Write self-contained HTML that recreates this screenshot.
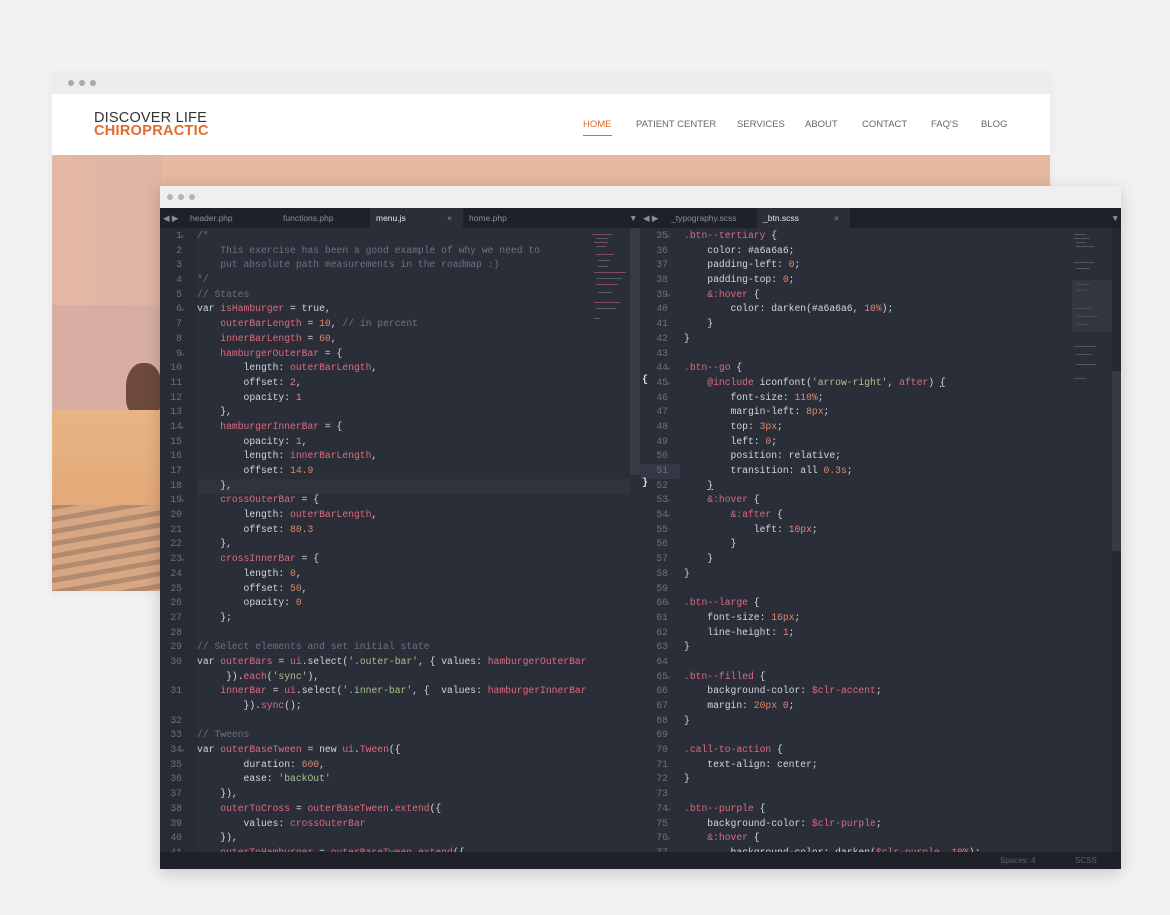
<!DOCTYPE html>
<html><head><meta charset="utf-8"><style>
*{margin:0;padding:0;box-sizing:border-box}
body{width:1170px;height:915px;background:#f2f2f2;position:relative;overflow:hidden;font-family:"Liberation Sans",sans-serif}
.dot{position:absolute;width:6px;height:6px;border-radius:50%;background:#a9a9a9}
#back{position:absolute;left:52px;top:72px;width:998px;height:519px;background:#fff;box-shadow:0 2px 8px rgba(0,0,0,.06)}
#back .tb{height:22px;background:#ececec;position:relative}
#back .hd{height:61px;background:#fff;position:relative}
.logo1{position:absolute;left:42px;top:16px;font-size:14.5px;color:#333;letter-spacing:.2px}
.logo2{position:absolute;left:42px;top:29px;font-size:14.5px;color:#e06a2c;font-weight:bold;letter-spacing:.3px}
.nav{position:absolute;top:25px;font-size:9.5px;color:#666}
#photo{position:absolute;left:0;top:83px;width:998px;height:436px;background:linear-gradient(180deg,#e6b9a0 0%,#e1b29a 30%,#d8b0a0 55%,#e2ae84 68%,#e8b07c 80%,#c99a74 100%)}
#front{position:absolute;left:160px;top:186px;width:961px;height:683px;background:#2a2e38;box-shadow:0 4px 16px rgba(0,0,0,.18)}
#front .tb{height:22px;background:#efefef;position:relative}
.tabs{position:absolute;top:22px;height:20px;background:#1e2128;font-size:8.5px;color:#8a8f99}
.tab{position:absolute;top:5px}
.pane{position:absolute;top:42px;bottom:17px;overflow:hidden;font-family:"Liberation Mono",monospace;font-size:9.7px;color:#d3d6db}
.row{height:14.7px;line-height:14.7px;white-space:pre;position:relative}
.ln{position:absolute;text-align:right;color:#6b717c;width:22px}
.c{color:#6c7280}.r{color:#de6a7e}.n{color:#e2876a}.s{color:#a7c48a}
.status{position:absolute;left:0;bottom:0;width:961px;height:17px;background:#1e2128;font-size:8px;color:#5e636d}
</style></head><body>
<div id="back">
 <div class="tb"><div class="dot" style="left:16px;top:8px"></div><div class="dot" style="left:27px;top:8px"></div><div class="dot" style="left:38px;top:8px"></div></div>
 <div class="hd">
  <div class="logo1">DISCOVER LIFE</div><div class="logo2">CHIROPRACTIC</div>
  <div class="nav" style="left:531px;color:#e06a2c">HOME</div>
  <div style="position:absolute;left:531px;top:41px;width:29px;height:1px;background:#e06a2c"></div>
  <div class="nav" style="left:584px">PATIENT CENTER</div>
  <div class="nav" style="left:685px">SERVICES</div>
  <div class="nav" style="left:753px">ABOUT</div>
  <div class="nav" style="left:810px">CONTACT</div>
  <div class="nav" style="left:879px">FAQ'S</div>
  <div class="nav" style="left:929px">BLOG</div>
 </div>
 <div id="photo">
  <div style="position:absolute;left:0;top:0;width:110px;height:155px;background:linear-gradient(90deg,#e4b8a4,#e0b4a4)"></div>
  <div style="position:absolute;left:0;top:150px;width:110px;height:110px;background:#d8aea2"></div>
  <div style="position:absolute;left:74px;top:208px;width:36px;height:52px;border-radius:45% 45% 30% 30%;background:#6e4a3e"></div>
  <div style="position:absolute;left:0;top:255px;width:110px;height:100px;background:linear-gradient(180deg,#e8b585,#e3a877)"></div>
  <div style="position:absolute;left:0;top:350px;width:110px;height:86px;background:repeating-linear-gradient(170deg,#b28a70 0 5px,#d9a683 5px 12px)"></div>
 </div>
</div>
<div id="front">
 <div class="tb"><div class="dot" style="left:7px;top:8px;background:#b4b4b4"></div><div class="dot" style="left:18px;top:8px;background:#b4b4b4"></div><div class="dot" style="left:29px;top:8px;background:#b4b4b4"></div></div>
 <div class="tabs" style="left:0;width:480px">
  <div class="tab" style="left:3px">◀ ▶</div>
  <div class="tab" style="left:30px">header.php</div>
  <div class="tab" style="left:123px">functions.php</div>
  <div style="position:absolute;left:210px;top:0;width:93px;height:20px;background:#2a2e38"></div>
  <div class="tab" style="left:216px;color:#e6e6e6">menu.js</div>
  <div class="tab" style="left:287px">×</div>
  <div class="tab" style="left:309px">home.php</div>
  <div class="tab" style="left:469px">▼</div>
 </div>
 <div class="tabs" style="left:480px;width:481px">
  <div class="tab" style="left:3px">◀ ▶</div>
  <div class="tab" style="left:31px">_typography.scss</div>
  <div style="position:absolute;left:117px;top:0;width:93px;height:20px;background:#2a2e38"></div>
  <div class="tab" style="left:123px;color:#e6e6e6">_btn.scss</div>
  <div class="tab" style="left:194px">×</div>
  <div class="tab" style="left:471px">▼</div>
 </div>
 <div style="position:absolute;left:470px;top:42px;width:10px;height:247px;background:#363b46"></div>
 <div style="position:absolute;left:952px;top:42px;width:9px;height:624px;background:#252830"></div>
 <div style="position:absolute;left:952px;top:185px;width:9px;height:180px;background:#353a45"></div>
 <div style="position:absolute;left:0;top:293px;width:470px;height:15px;background:#2f333e"></div>
 <div style="position:absolute;left:480px;top:278px;width:40px;height:15px;background:#333844"></div>
 <div style="position:absolute;left:0;top:42px;width:37px;height:624px;background:#282b34"></div>
 <svg style="position:absolute;left:430px;top:46px" width="40" height="95"><g fill="#d86a7a" opacity=".5"><rect x="2" y="2" width="20" height="1"/><rect x="4" y="10" width="14" height="1"/><rect x="6" y="22" width="18" height="1"/><rect x="4" y="40" width="32" height="1"/><rect x="6" y="52" width="22" height="1"/><rect x="4" y="70" width="26" height="1"/></g><g fill="#aeb2ba" opacity=".35"><rect x="6" y="6" width="12" height="1"/><rect x="6" y="14" width="10" height="1"/><rect x="8" y="28" width="12" height="1"/><rect x="8" y="34" width="10" height="1"/><rect x="6" y="46" width="26" height="1"/><rect x="8" y="60" width="14" height="1"/><rect x="6" y="76" width="20" height="1"/><rect x="4" y="86" width="6" height="1"/></g></svg>
 <svg style="position:absolute;left:912px;top:46px" width="40" height="160"><g fill="#aeb2ba" opacity=".3"><rect x="2" y="2" width="12" height="1"/><rect x="2" y="6" width="16" height="1"/><rect x="4" y="10" width="10" height="1"/><rect x="4" y="14" width="18" height="1"/><rect x="2" y="30" width="20" height="1"/><rect x="4" y="36" width="14" height="1"/><rect x="4" y="52" width="14" height="1"/><rect x="4" y="58" width="10" height="1"/><rect x="2" y="76" width="18" height="1"/><rect x="4" y="84" width="22" height="1"/><rect x="4" y="92" width="12" height="1"/><rect x="2" y="114" width="22" height="1"/><rect x="4" y="122" width="16" height="1"/><rect x="4" y="132" width="20" height="1"/><rect x="2" y="146" width="12" height="1"/></g><rect x="0" y="48" width="40" height="52" fill="#3a3f4a" opacity=".5"/></svg>
 <div class="pane" style="left:0;width:430px" id="L"></div>
 <div class="pane" style="left:480px;width:430px" id="R"></div>
 <div style="position:absolute;left:482px;top:189px;font-family:'Liberation Mono',monospace;font-size:10px;color:#ddd;font-weight:bold">{</div>
 <div style="position:absolute;left:482px;top:292px;font-family:'Liberation Mono',monospace;font-size:10px;color:#ddd;font-weight:bold">}</div>
 <div class="status"><span style="position:absolute;left:840px;top:4px">Spaces: 4</span><span style="position:absolute;left:915px;top:4px">SCSS</span></div>
</div>
<script>
function build(id,lines,start,gx,cx){
 var h='';var n=start;
 lines.forEach(function(l){
  var num='',code=l;
  if(l.charAt(0)=='~'){code=l.slice(1);}else{num=n++;}
  var fold=code.charAt(0)=='^';if(fold)code=code.slice(1);
  h+='<div class="row"><span class="ln" style="left:'+gx+'px">'+num+'</span>'+(fold?'<span class="ln" style="left:'+(gx+20)+'px;width:10px;text-align:left;font-size:8px">⌄</span>':'')+'<span style="position:absolute;left:'+cx+'px">'+code+'</span></div>';
 });
 document.getElementById(id).innerHTML='<div style="padding-top:1px">'+h+'</div>';
}
var L=[
'^<span class="c">/*</span>',
'<span class="c">    This exercise has been a good example of why we need to</span>',
'<span class="c">    put absolute path measurements in the roadmap :)</span>',
'<span class="c">*/</span>',
'<span class="c">// States</span>',
'^var <span class="r">isHamburger</span> = true,',
'    <span class="r">outerBarLength</span> = <span class="n">10</span>, <span class="c">// in percent</span>',
'    <span class="r">innerBarLength</span> = <span class="n">60</span>,',
'^    <span class="r">hamburgerOuterBar</span> = {',
'        length: <span class="r">outerBarLength</span>,',
'        offset: <span class="n">2</span>,',
'        opacity: <span class="n">1</span>',
'    },',
'^    <span class="r">hamburgerInnerBar</span> = {',
'        opacity: <span class="n">1</span>,',
'        length: <span class="r">innerBarLength</span>,',
'        offset: <span class="n">14.9</span>',
'    },',
'^    <span class="r">crossOuterBar</span> = {',
'        length: <span class="r">outerBarLength</span>,',
'        offset: <span class="n">80.3</span>',
'    },',
'^    <span class="r">crossInnerBar</span> = {',
'        length: <span class="n">0</span>,',
'        offset: <span class="n">50</span>,',
'        opacity: <span class="n">0</span>',
'    };',
'',
'<span class="c">// Select elements and set initial state</span>',
'var <span class="r">outerBars</span> = <span class="r">ui</span>.select(<span class="s">\'.outer-bar\'</span>, { values: <span class="r">hamburgerOuterBar</span>',
'~     }).<span class="r">each</span>(<span class="s">\'sync\'</span>),',
'    <span class="r">innerBar</span> = <span class="r">ui</span>.select(<span class="s">\'.inner-bar\'</span>, {  values: <span class="r">hamburgerInnerBar</span>',
'~        }).<span class="r">sync</span>();',
'',
'<span class="c">// Tweens</span>',
'^var <span class="r">outerBaseTween</span> = new <span class="r">ui</span>.<span class="r">Tween</span>({',
'        duration: <span class="n">600</span>,',
'        ease: <span class="s">\'backOut\'</span>',
'    }),',
'    <span class="r">outerToCross</span> = <span class="r">outerBaseTween</span>.<span class="r">extend</span>({',
'        values: <span class="r">crossOuterBar</span>',
'    }),',
'    <span class="r">outerToHamburger</span> = <span class="r">outerBaseTween</span>.<span class="r">extend</span>({'
];
var R=[
'^<span class="r">.btn--tertiary</span> {',
'    color: #a6a6a6;',
'    padding-left: <span class="n">0</span>;',
'    padding-top: <span class="n">0</span>;',
'^    <span class="r">&amp;:hover</span> {',
'        color: darken(#a6a6a6, <span class="n">10%</span>);',
'    }',
'}',
'',
'^<span class="r">.btn--go</span> {',
'^    <span class="r">@include</span> iconfont(<span class="s">\'arrow-right\'</span>, <span class="r">after</span>) <u>{</u>',
'        font-size: <span class="n">110%</span>;',
'        margin-left: <span class="n">8px</span>;',
'        top: <span class="n">3px</span>;',
'        left: <span class="n">0</span>;',
'        position: relative;',
'        transition: all <span class="n">0.3s</span>;',
'    <u>}</u>',
'^    <span class="r">&amp;:hover</span> {',
'^        <span class="r">&amp;:after</span> {',
'            left: <span class="n">10px</span>;',
'        }',
'    }',
'}',
'',
'^<span class="r">.btn--large</span> {',
'    font-size: <span class="n">16px</span>;',
'    line-height: <span class="n">1</span>;',
'}',
'',
'^<span class="r">.btn--filled</span> {',
'    background-color: <span class="r">$clr-accent</span>;',
'    margin: <span class="n">20px 0</span>;',
'}',
'',
'<span class="r">.call-to-action</span> {',
'    text-align: center;',
'}',
'',
'^<span class="r">.btn--purple</span> {',
'    background-color: <span class="r">$clr-purple</span>;',
'^    <span class="r">&amp;:hover</span> {',
'        background-color: darken(<span class="r">$clr-purple</span>, <span class="n">10%</span>);'
];
build('L',L,1,0,37);
build('R',R,35,6,44);
</script>
</body></html>
